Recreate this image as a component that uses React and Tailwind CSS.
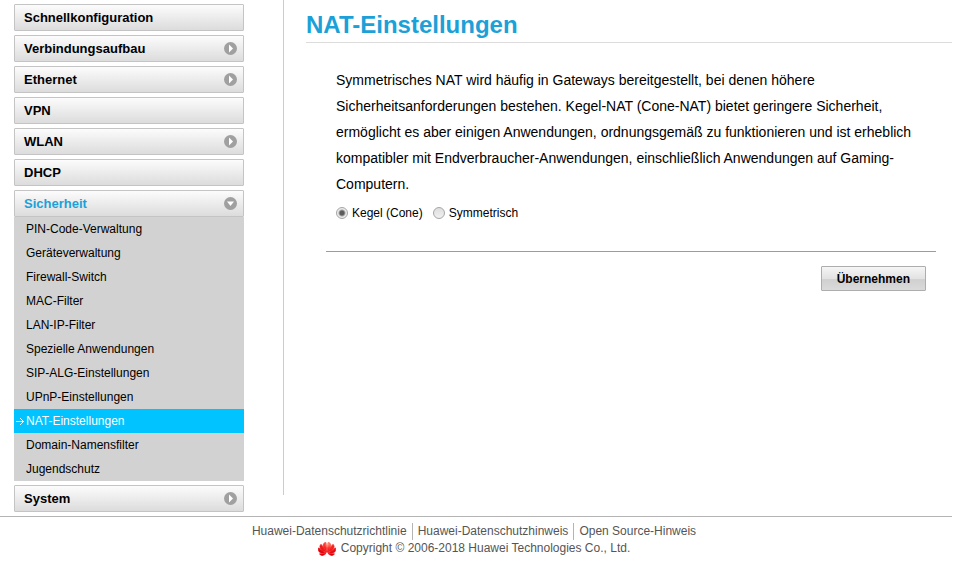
import React, { useState } from "react";

const securityItems = [
  "PIN-Code-Verwaltung",
  "Geräteverwaltung",
  "Firewall-Switch",
  "MAC-Filter",
  "LAN-IP-Filter",
  "Spezielle Anwendungen",
  "SIP-ALG-Einstellungen",
  "UPnP-Einstellungen",
  "NAT-Einstellungen",
  "Domain-Namensfilter",
  "Jugendschutz",
];

const menu = [
  { label: "Schnellkonfiguration" },
  { label: "Verbindungsaufbau", expandable: true },
  { label: "Ethernet", expandable: true },
  { label: "VPN" },
  { label: "WLAN", expandable: true },
  { label: "DHCP" },
  { label: "Sicherheit", expandable: true, items: securityItems },
  { label: "System", expandable: true },
];

const ArrowBadge = ({ open }) => (
  <svg width="13" height="13" viewBox="0 0 13 13" aria-hidden="true">
    <circle cx="6.5" cy="6.5" r="6.5" fill="#a0a0a0" />
    <path d={open ? "M3 4.500h7L6.500 9z" : "M5 2.500v8L9 6.500z"} fill="#fff" />
  </svg>
);

const CurrentArrow = () => (
  <svg width="8" height="9" viewBox="0 0 8 9" fill="none" stroke="#fff" aria-hidden="true">
    <path d="M0 4.5h7.5M4 1l3.5 3.5L4 8" strokeWidth="0.9" />
  </svg>
);

const HuaweiLogo = () => (
  <svg width="18" height="14" viewBox="0 0 18 14" aria-hidden="true">
    <defs>
      <radialGradient id="petal" cx="10" cy="2" r="11" gradientUnits="userSpaceOnUse">
        <stop offset="0" stopColor="#ff9478" />
        <stop offset="0.4" stopColor="#fb2a26" />
        <stop offset="1" stopColor="#e00008" />
      </radialGradient>
    </defs>
    <g fill="url(#petal)" stroke="url(#petal)" strokeWidth="0.7" strokeLinejoin="round">
      <path d="M8.6 10.200C8.800 6 8.800 2.600 7.900.400 5.900.600 4.900 2 5.300 4.100c.400 2 1.600 4.200 3.300 6.100z" />
      <path d="M8.300 10.700C6.900 7.600 5 4.300 3 2.300 1.700 3.600 1.500 5.200 2.700 6.800c1.200 1.500 3.400 3 5.600 3.900z" />
      <path d="M7.900 11.300C5.500 9.300 3 7.300.6 5.900c-.7 2.200 0 4 1.900 4.800 1.500.6 3.600.7 5.400.6z" />
      <path d="M7.600 11.800H1.500c1 1.600 2.300 2 3.700 1.500 1-.4 1.800-.9 2.400-1.500z" />
      <path d="M9.400 10.200C9.200 6 9.200 2.600 10.100.4c2 .2 3 1.600 2.600 3.700-.4 2-1.600 4.200-3.300 6.100z" />
      <path d="M9.700 10.700C11.100 7.600 13 4.300 15 2.300c1.300 1.300 1.500 2.900.3 4.500-1.200 1.500-3.400 3-5.600 3.900z" />
      <path d="M10.100 11.300c2.400-2 4.900-4 7.300-5.400.7 2.200 0 4-1.900 4.800-1.500.6-3.600.7-5.400.6z" />
      <path d="M10.400 11.800h6.100c-1 1.600-2.300 2-3.700 1.500-1-.4-1.800-.9-2.400-1.500z" />
    </g>
  </svg>
);

const Sidebar = () => {
  const [current, setCurrent] = useState("NAT-Einstellungen");

  return (
    <nav className="w-[230px] shrink-0 flex flex-col gap-1">
      {menu.map(({ label, expandable, items }) => (
        <div key={label}>
          <button
            type="button"
            aria-expanded={expandable ? Boolean(items) : undefined}
            className={`flex w-full h-[27px] items-center justify-between rounded-[1px] border border-[#c4c4c4] bg-linear-to-b from-[#fcfcfc] to-[#dcdcdc] pl-[9px] pr-[6px] text-[13px] font-bold ${
              items ? "text-[#1ba1d8]" : "text-black"
            }`}
          >
            {label}
            {expandable && <ArrowBadge open={Boolean(items)} />}
          </button>
          {items && (
            <ul className="bg-[#d2d2d2] text-xs">
              {items.map((item) => (
                <li key={item}>
                  <a
                    href="#"
                    onClick={() => setCurrent(item)}
                    className={`flex h-6 items-center ${
                      item === current ? "bg-[#00c3ff] text-white" : "text-black"
                    }`}
                  >
                    <span className="flex w-3 justify-center">
                      {item === current && <CurrentArrow />}
                    </span>
                    {item}
                  </a>
                </li>
              ))}
            </ul>
          )}
        </div>
      ))}
    </nav>
  );
};

const NatOption = ({ label, value, mode, onChange }) => (
  <label className="flex items-center gap-1">
    <input
      type="radio"
      name="nat"
      value={value}
      checked={mode === value}
      onChange={() => onChange(value)}
      className={`size-3 appearance-none rounded-full border border-[#a6a6a6] ${
        mode === value
          ? "bg-[radial-gradient(circle,#5c5c5c_2px,#ececec_4px)]"
          : "bg-linear-to-b from-[#dedede] to-[#f0f0f0]"
      }`}
    />
    {label}
  </label>
);

const NatSettings = () => {
  const [mode, setMode] = useState("cone");

  return (
    <main className="flex-1 pl-[22px] pt-2">
      <h1 className="border-b border-[#dcdcdc] pb-px text-2xl leading-[33px] font-bold text-[#1ba1d8]">
        NAT-Einstellungen
      </h1>
      <form className="ml-5 mr-4 mt-6" onSubmit={(e) => e.preventDefault()}>
        <div className="border-b border-[#9c9c9c] px-[10px] pb-[30px]">
          <p className="text-sm leading-[26px]">
            Symmetrisches NAT wird häufig in Gateways bereitgestellt, bei denen höhere
            Sicherheitsanforderungen bestehen. Kegel-NAT (Cone-NAT) bietet geringere
            Sicherheit, ermöglicht es aber einigen Anwendungen, ordnungsgemäß zu
            funktionieren und ist erheblich kompatibler mit Endverbraucher-Anwendungen,
            einschließlich Anwendungen auf Gaming-Computern.
          </p>
          <div className="mt-2 flex gap-[10px] text-xs">
            <NatOption label="Kegel (Cone)" value="cone" mode={mode} onChange={setMode} />
            <NatOption label="Symmetrisch" value="symmetric" mode={mode} onChange={setMode} />
          </div>
        </div>
        <div className="flex justify-end px-[10px] pt-[14px]">
          <button
            type="submit"
            className="h-[25px] rounded-[1px] border border-[#adadad] bg-[linear-gradient(#f5f5f5,#e3e3e3_50%,#d0d0d0_55%,#dadada)] px-[15px] text-xs font-bold"
          >
            Übernehmen
          </button>
        </div>
      </form>
    </main>
  );
};

const Footer = () => (
  <footer className="border-t border-[#b4b4b4] pt-[6px] pr-1 text-center text-xs leading-[17px] text-[#555]">
    <div className="flex justify-center divide-x divide-[#b4b4b4]">
      <a href="#" className="pr-[5px]">Huawei-Datenschutzrichtlinie</a>
      <a href="#" className="px-[5px]">Huawei-Datenschutzhinweis</a>
      <a href="#" className="pl-[5px]">Open Source-Hinweis</a>
    </div>
    <div className="flex items-center justify-center gap-[5px]">
      <HuaweiLogo />
      Copyright © 2006-2018 Huawei Technologies Co., Ltd.
    </div>
  </footer>
);

const App = () => (
  <div className="min-h-screen bg-white pr-[26px] font-['Liberation_Sans',Arial,sans-serif] text-black">
    <div className="flex pl-[14px] pb-1">
      <div className="pt-1">
        <Sidebar />
      </div>
      <div className="ml-[39px] mb-[17px] flex flex-1 border-l border-[#ccc]">
        <NatSettings />
      </div>
    </div>
    <Footer />
  </div>
);

export default App;
